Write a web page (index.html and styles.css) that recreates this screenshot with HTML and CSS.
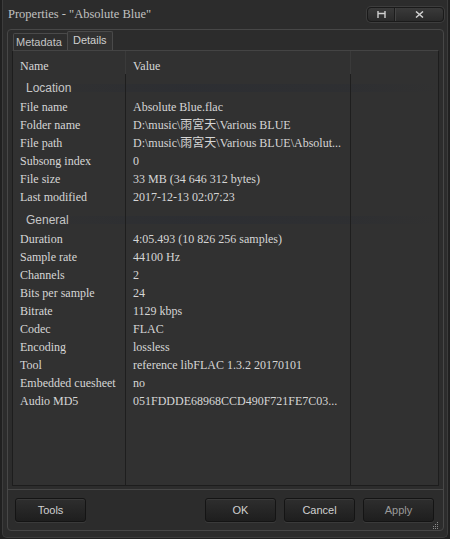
FILE: index.html
```html
<!DOCTYPE html>
<html>
<head>
<meta charset="utf-8">
<link rel="stylesheet" href="styles.css">
</head>
<body>
<div class="window">
  <div class="titlebar">
    <div class="title">Properties - "Absolute Blue"</div>
    <div class="controls">
      <span class="ctl ctl-max"><svg width="9" height="7" viewBox="0 0 9 7"><path d="M1 0v7M8 0v7M1 2.5h7" stroke="#d0d0d0" stroke-width="1.4" fill="none"/></svg></span>
      <span class="ctl ctl-close"><svg width="9" height="7" viewBox="0 0 9 7"><path d="M1 0.5l7 6M8 0.5l-7 6" stroke="#d0d0d0" stroke-width="1.5" fill="none"/></svg></span>
    </div>
  </div>
  <div class="frame">
    <div class="tabs">
      <div class="tab">Metadata</div>
      <div class="tab active">Details</div>
    </div>
    <div class="tabpage">
      <div class="list">
        <div class="row head"><span class="c1">Name</span><span class="c2">Value</span><span class="c3"></span></div>
        <div class="row group"><span class="c1">Location</span><span class="c2"></span><span class="c3"></span></div>
        <div class="row"><span class="c1">File name</span><span class="c2">Absolute Blue.flac</span><span class="c3"></span></div>
        <div class="row"><span class="c1">Folder name</span><span class="c2">D:\music\雨宮天\Various BLUE</span><span class="c3"></span></div>
        <div class="row"><span class="c1">File path</span><span class="c2">D:\music\雨宮天\Various BLUE\Absolut...</span><span class="c3"></span></div>
        <div class="row"><span class="c1">Subsong index</span><span class="c2">0</span><span class="c3"></span></div>
        <div class="row"><span class="c1">File size</span><span class="c2">33 MB (34 646 312 bytes)</span><span class="c3"></span></div>
        <div class="row"><span class="c1">Last modified</span><span class="c2">2017-12-13 02:07:23</span><span class="c3"></span></div>
        <div class="row group"><span class="c1">General</span><span class="c2"></span><span class="c3"></span></div>
        <div class="row"><span class="c1">Duration</span><span class="c2">4:05.493 (10 826 256 samples)</span><span class="c3"></span></div>
        <div class="row"><span class="c1">Sample rate</span><span class="c2">44100 Hz</span><span class="c3"></span></div>
        <div class="row"><span class="c1">Channels</span><span class="c2">2</span><span class="c3"></span></div>
        <div class="row"><span class="c1">Bits per sample</span><span class="c2">24</span><span class="c3"></span></div>
        <div class="row"><span class="c1">Bitrate</span><span class="c2">1129 kbps</span><span class="c3"></span></div>
        <div class="row"><span class="c1">Codec</span><span class="c2">FLAC</span><span class="c3"></span></div>
        <div class="row"><span class="c1">Encoding</span><span class="c2">lossless</span><span class="c3"></span></div>
        <div class="row"><span class="c1">Tool</span><span class="c2">reference libFLAC 1.3.2 20170101</span><span class="c3"></span></div>
        <div class="row"><span class="c1">Embedded cuesheet</span><span class="c2">no</span><span class="c3"></span></div>
        <div class="row"><span class="c1">Audio MD5</span><span class="c2">051FDDDE68968CCD490F721FE7C03...</span><span class="c3"></span></div>
        <div class="row fill"><span class="c1"></span><span class="c2"></span><span class="c3"></span></div>
      </div>
    </div>
    <div class="buttons">
      <span class="btn">Tools</span>
      <span class="spacer"></span>
      <span class="btn">OK</span>
      <span class="btn">Cancel</span>
      <span class="btn disabled">Apply</span>
    </div>
    <span class="grip"><svg width="7" height="7" viewBox="0 0 7 7" fill="#8a8a8a"><rect x="5" y="0" width="1" height="1"/><rect x="3" y="2" width="1" height="1"/><rect x="5" y="2" width="1" height="1"/><rect x="1" y="4" width="1" height="1"/><rect x="3" y="4" width="1" height="1"/><rect x="5" y="4" width="1" height="1"/><rect x="1" y="6" width="1" height="1"/><rect x="3" y="6" width="1" height="1"/><rect x="5" y="6" width="1" height="1"/></svg></span>
  </div>
</div>
</body>
</html>
```

FILE: styles.css
```css
html, body {
  margin: 0;
  padding: 0;
  background: #202020;
}
body {
  width: 450px;
  height: 539px;
  overflow: hidden;
}
.window {
  box-sizing: border-box;
  width: 446px;
  height: 538px;
  margin-left: 2px;
  border: 1px solid #3c3c3c;
  border-top: none;
  border-radius: 0 0 5px 5px;
  background: #2c2c2c;
  display: flex;
  flex-direction: column;
}
.titlebar {
  height: 29px;
  display: flex;
  align-items: flex-start;
  justify-content: space-between;
  flex: none;
}
.title {
  font-family: "Liberation Serif", "Noto Sans CJK TC", serif;
  font-size: 12.5px;
  color: #c0c0c0;
  padding: 7px 0 0 5px;
  line-height: 15px;
}
.controls {
  display: flex;
  margin: 7px 3px 0 0;
  height: 13px;
  border: 1px solid #1a1a1a;
  border-radius: 4px;
  box-shadow: 0 0 0 1px #3d3d3d;
  background: linear-gradient(#3a3a3a, #2a2a2a);
  overflow: hidden;
}
.ctl {
  display: flex;
  align-items: center;
  justify-content: center;
  height: 13px;
}
.ctl-max {
  width: 26px;
  border-right: 1px solid #1c1c1c;
}
.ctl-close {
  width: 47px;
  border-left: 1px solid #444;
}
.ctl svg { display: block; }
.frame {
  position: relative;
  flex: 1;
  margin: 0 3px 6px 4px;
  border: 1px solid #474747;
  border-radius: 4px;
  display: flex;
  flex-direction: column;
}
.tabs {
  height: 20px;
  display: flex;
  align-items: flex-end;
  padding-left: 5px;
  flex: none;
}
.tab {
  box-sizing: border-box;
  font-family: "Liberation Sans", Arial, sans-serif;
  font-size: 11px;
  color: #c4c4c4;
  border: 1px solid #4a4a4a;
  border-bottom: none;
  border-radius: 2px 2px 0 0;
  background: #2d2d2d;
  height: 17px;
  line-height: 17px;
  padding: 0 5px 0 2px;
  width: 55px;
}
.tab.active {
  height: 19px;
  line-height: 17px;
  width: 46px;
  margin-left: -1px;
  padding: 0 4px 0 5px;
  background: #323232;
  color: #d0d0d0;
}
.tabpage {
  flex: 1;
  border-bottom: 1px solid #474747;
  display: flex;
  flex-direction: column;
}
.list {
  flex: 1;
  margin: 0 4px 3px 4px;
  border: 1px solid #1d1d1d;
  border-top-color: #444;
  background: #313131;
  display: flex;
  flex-direction: column;
  font-family: "Liberation Serif", "Noto Sans CJK TC", serif;
  font-size: 12px;
  color: #d6d6d6;
}
.row {
  display: flex;
  height: 18px;
  line-height: 18px;
  flex: none;
}
.row span {
  box-sizing: border-box;
  white-space: nowrap;
  overflow: hidden;
  padding-left: 7px;
}
.c1 { width: 113px; border-right: 1px solid #1e1e1e; }
.c2 { width: 225px; border-right: 1px solid #1e1e1e; }
.c3 { flex: 1; }
.row.head {
  height: 23px;
}
.row.head span {
  padding-top: 6px;
}
.row.head .c1, .row.head .c2 {
  border-right-color: #3a3a3a;
}
.row.group {
  height: 24px;
  line-height: 28px;
  background: linear-gradient(to right, rgba(40,44,52,0) 0%, rgba(38,42,52,0.4) 40%, rgba(38,42,52,0.25) 80%, rgba(40,44,52,0) 100%);
  background-size: 100% 8px;
  background-repeat: no-repeat;
  background-position: 0 10px;
}
.row.group .c1 {
  font-family: "Liberation Sans", Arial, sans-serif;
  font-size: 12px;
  color: #c6c6c6;
  padding-left: 13px;
}
.row.fill {
  flex: 1;
  height: auto;
}
.row.fill span { height: 100%; }
.buttons {
  flex: none;
  height: 40px;
  box-sizing: border-box;
  padding: 8px 9px 0 7px;
  display: flex;
  align-items: flex-start;
  gap: 8px;
}
.spacer { flex: 1; }
.btn {
  box-sizing: border-box;
  width: 71px;
  height: 24px;
  border: 1px solid #141414;
  border-radius: 3px;
  background: linear-gradient(#2e2e2e, #1e1e1e);
  box-shadow: 0 1px 0 #3a3a3a, inset 0 1px 0 #3a3a3a;
  font-family: "Liberation Sans", Arial, sans-serif;
  font-size: 11px;
  color: #d0d0d0;
  text-align: center;
  line-height: 22px;
}
.btn.disabled { color: #9a9a9a; }
.grip {
  position: absolute;
  right: 4px;
  bottom: 1px;
  line-height: 0;
}
```
